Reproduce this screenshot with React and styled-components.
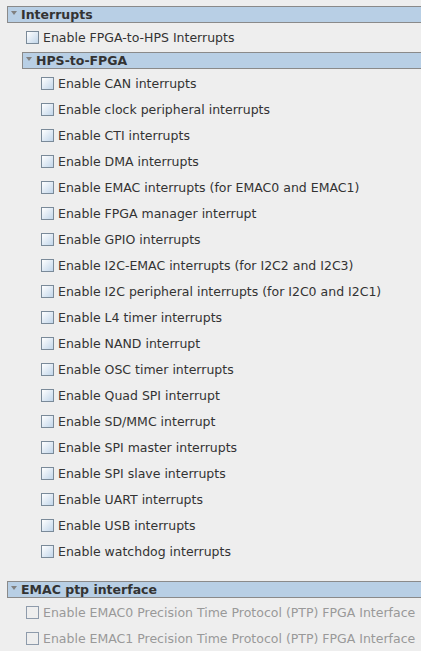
import React from "react";
import styled, { createGlobalStyle } from "styled-components";

const GlobalStyle = createGlobalStyle`
  html, body {
    margin: 0;
    padding: 0;
    background: #eeeeee;
    overflow: hidden;
  }
  body {
    font-family: "DejaVu Sans", "Liberation Sans", sans-serif;
    font-size: 12.5px;
    color: #333333;
  }
`;

const Page = styled.div`
  padding: 6px 0 0 7px;
`;

const SectionStyled = styled.div`
  margin-top: ${(p) => (p.nested ? "2px" : "0")};
  margin-bottom: ${(p) => p.gapAfter || 0}px;
`;

const Header = styled.div`
  height: 17px;
  box-sizing: border-box;
  margin-right: -2px;
  border: 1px solid #8a8a8a;
  background-color: #b8cfe5;
  display: flex;
  align-items: center;
  padding-left: 3px;
  font-weight: bold;
  color: #333333;
  white-space: nowrap;
`;

const Arrow = styled.span`
  width: 0;
  height: 0;
  border-left: 3.5px solid transparent;
  border-right: 3.5px solid transparent;
  border-top: 4px solid #808080;
  margin-right: 4px;
  margin-top: -3px;
`;

const Body = styled.div`
  margin-top: 1px;
  padding-left: 15px;
`;

const Row = styled.label`
  height: 26px;
  display: flex;
  align-items: center;
  padding-left: 4px;
  white-space: nowrap;
  color: ${(p) => (p.disabled ? "#999999" : "#333333")};
`;

const Box = styled.span`
  width: 13px;
  height: 13px;
  box-sizing: border-box;
  flex-shrink: 0;
  border: 1px solid ${(p) => (p.disabled ? "#8e9bab" : "#7a8a99")};
  background: ${(p) =>
    p.disabled ? "transparent" : "linear-gradient(to bottom right, #ffffff, #c2d6ea)"};
  margin-right: 4px;
  margin-top: 1px;
`;

function Section({ title, nested, gapAfter, children }) {
  return (
    <SectionStyled nested={nested} gapAfter={gapAfter}>
      <Header>
        <Arrow />
        <span>{title}</span>
      </Header>
      <Body>{children}</Body>
    </SectionStyled>
  );
}

function Check({ label, disabled }) {
  return (
    <Row disabled={disabled}>
      <Box disabled={disabled} />
      <span>{label}</span>
    </Row>
  );
}

const hpsToFpga = [
  "Enable CAN interrupts",
  "Enable clock peripheral interrupts",
  "Enable CTI interrupts",
  "Enable DMA interrupts",
  "Enable EMAC interrupts (for EMAC0 and EMAC1)",
  "Enable FPGA manager interrupt",
  "Enable GPIO interrupts",
  "Enable I2C-EMAC interrupts (for I2C2 and I2C3)",
  "Enable I2C peripheral interrupts (for I2C0 and I2C1)",
  "Enable L4 timer interrupts",
  "Enable NAND interrupt",
  "Enable OSC timer interrupts",
  "Enable Quad SPI interrupt",
  "Enable SD/MMC interrupt",
  "Enable SPI master interrupts",
  "Enable SPI slave interrupts",
  "Enable UART interrupts",
  "Enable USB interrupts",
  "Enable watchdog interrupts"
];

export default function App() {
  return (
    <Page>
      <GlobalStyle />
      <Section title="Interrupts" gapAfter={17}>
        <Check label="Enable FPGA-to-HPS Interrupts" />
        <Section title="HPS-to-FPGA" nested>
          {hpsToFpga.map((label) => (
            <Check key={label} label={label} />
          ))}
        </Section>
      </Section>
      <Section title="EMAC ptp interface">
        <Check disabled label="Enable EMAC0 Precision Time Protocol (PTP) FPGA Interface" />
        <Check disabled label="Enable EMAC1 Precision Time Protocol (PTP) FPGA Interface" />
      </Section>
    </Page>
  );
}
